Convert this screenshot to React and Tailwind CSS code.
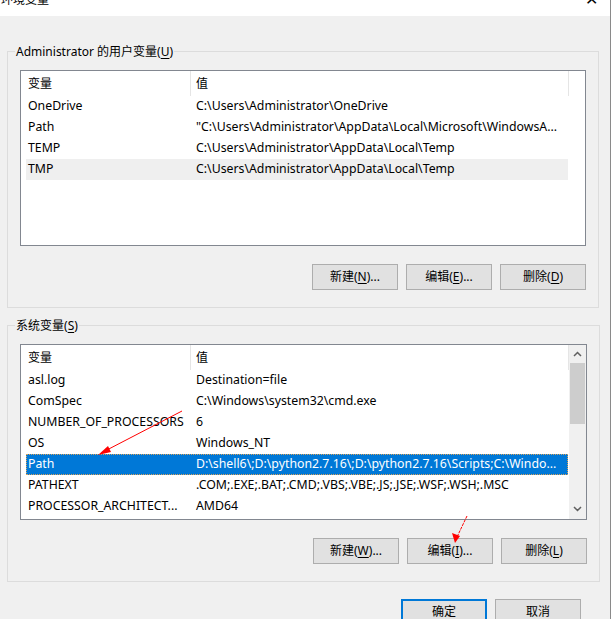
const FONT = "font-['Noto_Sans','Noto_Sans_CJK_SC',sans-serif]";

const userVars = [
  ['OneDrive', 'C:\\Users\\Administrator\\OneDrive'],
  ['Path', '"C:\\Users\\Administrator\\AppData\\Local\\Microsoft\\WindowsA...'],
  ['TEMP', 'C:\\Users\\Administrator\\AppData\\Local\\Temp'],
  ['TMP', 'C:\\Users\\Administrator\\AppData\\Local\\Temp', 'hover'],
];

const sysVars = [
  ['asl.log', 'Destination=file'],
  ['ComSpec', 'C:\\Windows\\system32\\cmd.exe'],
  ['NUMBER_OF_PROCESSORS', '6'],
  ['OS', 'Windows_NT'],
  ['Path', 'D:\\shell6\\;D:\\python2.7.16\\;D:\\python2.7.16\\Scripts;C:\\Windo...', 'selected'],
  ['PATHEXT', '.COM;.EXE;.BAT;.CMD;.VBS;.VBE;.JS;.JSE;.WSF;.WSH;.MSC'],
  ['PROCESSOR_ARCHITECT...', 'AMD64'],
];

function Btn({ label, hot, rest, primary }) {
  return (
    <button
      className={`h-[26px] w-[86px] shrink-0 bg-[#e1e1e1] text-[12px] text-black flex items-center justify-center ${
        primary ? 'border-2 border-[#0078d7]' : 'border border-[#adadad]'
      }`}
    >
      {label}
      {hot && (
        <>
          (<span className="underline underline-offset-2">{hot}</span>)
        </>
      )}
      {rest}
    </button>
  );
}

function Header() {
  return (
    <div className="h-[25px] flex items-center text-[12px] text-black">
      <div className="w-[170px] pl-[7px] h-full flex items-center border-r border-[#e5e5e5]">变量</div>
      <div className="w-[378px] pl-[5px] h-full flex items-center border-r border-[#e5e5e5]">值</div>
    </div>
  );
}

function Row({ name, value, state }) {
  const bg =
    state === 'selected'
      ? 'bg-[#0078d7] text-white outline outline-1 outline-dotted outline-[#d9a25a] -outline-offset-1'
      : state === 'hover'
      ? 'bg-[#efefef] text-black'
      : 'text-black';
  return (
    <div className={`ml-[5px] w-[542px] h-[21px] flex items-center text-[12.3px] whitespace-nowrap ${bg}`}>
      <div className="w-[164px] pl-[2px] overflow-hidden">{name}</div>
      <div className="flex-1 pl-[6px] overflow-hidden">{value}</div>
    </div>
  );
}

function ListBox({ rows, scroll }) {
  return (
    <div className="h-[176px] border border-[#828790] bg-white flex overflow-hidden">
      <div className="flex-1">
        <Header />
        {rows.map(([n, v, s]) => (
          <Row key={n + v} name={n} value={v} state={s} />
        ))}
      </div>
      {scroll && (
        <div className="w-[17px] bg-[#f0f0f0] flex flex-col items-center">
          <div className="h-[18px] flex items-center justify-center">
            <svg width="9" height="6" viewBox="0 0 9 6">
              <path d="M1 5 L4.5 1.5 L8 5" fill="none" stroke="#606060" strokeWidth="1.5" />
            </svg>
          </div>
          <div className="w-[15px] h-[61px] bg-[#cdcdcd]" />
          <div className="flex-1" />
          <div className="h-[20px] flex items-center justify-center">
            <svg width="9" height="6" viewBox="0 0 9 6">
              <path d="M1 1 L4.5 4.5 L8 1" fill="none" stroke="#606060" strokeWidth="1.5" />
            </svg>
          </div>
        </div>
      )}
    </div>
  );
}

function Group({ title, hot, rows, scroll, buttons, className }) {
  return (
    <fieldset className={`shrink-0 mx-[7px] w-[592px] border border-[#dcdcdc] ${className}`}>
      <legend className="ml-[7px] px-[1px] text-[12px] leading-[17px] text-black">
        {title}(<span className="underline underline-offset-2">{hot}</span>)
      </legend>
      <div className="mx-[12px] mt-[10px]">
        <ListBox rows={rows} scroll={scroll} />
        <div className="mt-[18px] mb-[17px] flex justify-end gap-[8px]">
          {buttons.map((b) => (
            <Btn key={b.label} {...b} />
          ))}
        </div>
      </div>
    </fieldset>
  );
}

export default function App() {
  return (
    <div className={`w-[613px] h-[619px] bg-white overflow-hidden relative flex ${FONT}`}>
      <div className="w-[611px] h-full bg-[#f0f0f0] border-r border-[#8a8a8a] flex flex-col">
        <div className="h-[16px] shrink-0 bg-white flex items-start justify-between overflow-hidden">
          <span className="pl-[1px] text-[12px] leading-[16px] -mt-[8px] text-black">环境变量</span>
          <span className="mr-[12px] -mt-[9px] text-[16px] leading-[16px] font-light text-black">✕</span>
        </div>

        <Group
          className="mt-[27px]"
          title="Administrator 的用户变量"
          hot="U"
          rows={userVars}
          buttons={[
            { label: '新建', hot: 'N', rest: '...' },
            { label: '编辑', hot: 'E', rest: '...' },
            { label: '删除', hot: 'D' },
          ]}
        />

        <Group
          className="mt-[9px]"
          title="系统变量"
          hot="S"
          rows={sysVars}
          scroll
          buttons={[
            { label: '新建', hot: 'W', rest: '...' },
            { label: '编辑', hot: 'I', rest: '...' },
            { label: '删除', hot: 'L' },
          ]}
        />

        <div className="shrink-0 mt-[17px] pl-[401px] flex gap-[8px]">
          <Btn label="确定" primary />
          <Btn label="取消" />
        </div>
      </div>

      <svg className="absolute inset-0 pointer-events-none" width="613" height="619">
        <line x1="182" y1="411" x2="103" y2="452" stroke="#ff0000" strokeWidth="1" />
        <polygon points="98,455 108,446 111,452" fill="#ff0000" />
        <line x1="467" y1="516" x2="457" y2="537" stroke="#ff0000" strokeWidth="1" strokeDasharray="3 1" />
        <polygon points="455,543 452,533 460,536" fill="#ff0000" />
      </svg>
    </div>
  );
}
